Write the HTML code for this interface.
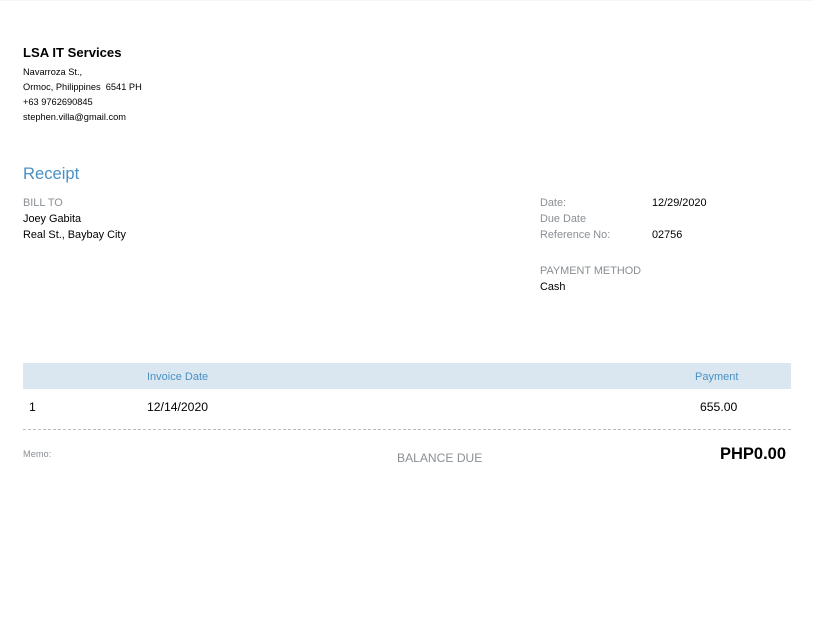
<!DOCTYPE html>
<html>
<head>
<meta charset="utf-8">
<style>
html,body{margin:0;padding:0;background:#fff;}
body{width:813px;height:620px;position:relative;overflow:hidden;font-family:"Liberation Sans",Arial,sans-serif;color:#000;}
.t{position:absolute;white-space:pre;line-height:16px;font-size:10.9px;}
.g{color:#8a8f94;}
.b{color:#4a90c4;}
.s{font-size:9.25px;}
</style>
</head>
<body>
<div style="position:absolute;left:0;top:0;width:813px;height:1px;background:#f7f7f7"></div>

<div class="t" style="left:23px;top:45px;font-size:13.1px;font-weight:bold;">LSA IT Services</div>
<div class="t s" style="left:23px;top:64px;">Navarroza St.,</div>
<div class="t s" style="left:23px;top:79px;">Ormoc, Philippines  6541 PH</div>
<div class="t s" style="left:23px;top:94px;">+63 9762690845</div>
<div class="t s" style="left:23px;top:109px;">stephen.villa@gmail.com</div>

<div class="t b" style="left:23px;top:164px;font-size:16.6px;line-height:19px;">Receipt</div>

<div class="t g" style="left:23px;top:195px;">BILL TO</div>
<div class="t" style="left:23px;top:211px;">Joey Gabita</div>
<div class="t" style="left:23px;top:227px;">Real St., Baybay City</div>

<div class="t g" style="left:540px;top:195px;">Date:</div>
<div class="t" style="left:652px;top:195px;">12/29/2020</div>
<div class="t g" style="left:540px;top:211px;">Due Date</div>
<div class="t g" style="left:540px;top:227px;">Reference No:</div>
<div class="t" style="left:652px;top:227px;">02756</div>
<div class="t g" style="left:540px;top:263px;">PAYMENT METHOD</div>
<div class="t" style="left:540px;top:279px;">Cash</div>

<div style="position:absolute;left:23px;top:363px;width:768px;height:26px;background:#dae7f1"></div>
<div class="t b" style="left:147px;top:369px;font-size:11px;">Invoice Date</div>
<div class="t b" style="left:695px;top:369px;font-size:11px;">Payment</div>

<div class="t" style="left:29px;top:399px;font-size:12.2px;">1</div>
<div class="t" style="left:147px;top:399px;font-size:12.2px;">12/14/2020</div>
<div class="t" style="left:700px;top:399px;font-size:12.2px;">655.00</div>

<div style="position:absolute;left:23px;top:429px;width:768px;height:0;border-top:1px dashed #bdbdbd"></div>

<div class="t g s" style="left:23px;top:446px;">Memo:</div>
<div class="t g" style="left:397px;top:450px;font-size:12.1px;">BALANCE DUE</div>
<div class="t" style="left:720px;top:445px;font-size:16.5px;line-height:18px;font-weight:bold;">PHP0.00</div>
</body>
</html>
